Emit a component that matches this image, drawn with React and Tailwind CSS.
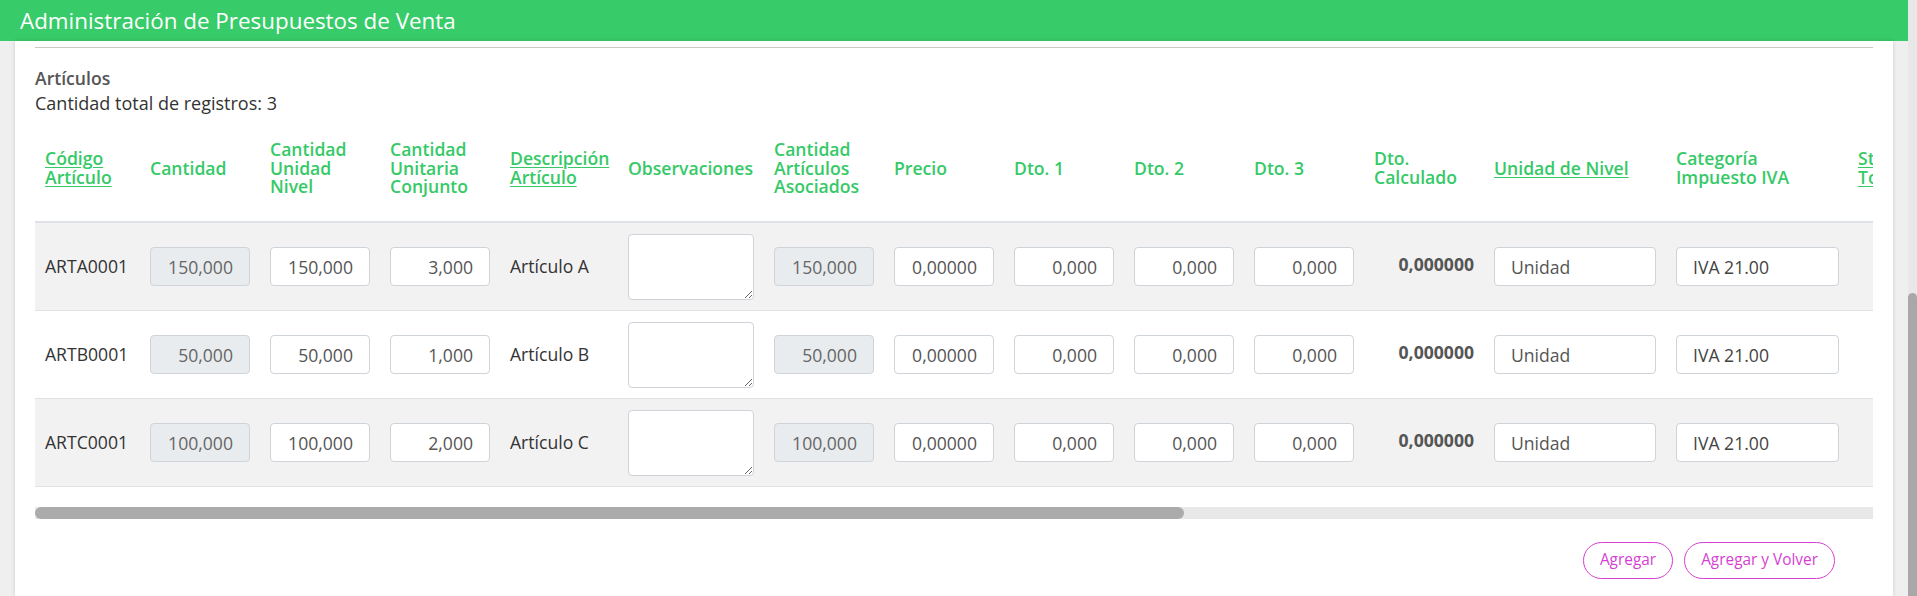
import React from 'react';

const rows = [
    { code: 'ARTA0001', qty: '150,000', qtyLevel: '150,000', unit: '3,000', desc: 'Artículo A', assoc: '150,000' },
    { code: 'ARTB0001', qty: '50,000', qtyLevel: '50,000', unit: '1,000', desc: 'Artículo B', assoc: '50,000' },
    { code: 'ARTC0001', qty: '100,000', qtyLevel: '100,000', unit: '2,000', desc: 'Artículo C', assoc: '100,000' },
];

// header cells: width class + label lines + whether it is a sort link
const headers = [
    { w: 'w-[105px]', lines: ['Código', 'Artículo'], link: true },
    { w: 'w-[120px]', lines: ['Cantidad'] },
    { w: 'w-[120px]', lines: ['Cantidad', 'Unidad', 'Nivel'] },
    { w: 'w-[120px]', lines: ['Cantidad', 'Unitaria', 'Conjunto'] },
    { w: 'w-[118px]', lines: ['Descripción', 'Artículo'], link: true },
    { w: 'w-[146px]', lines: ['Observaciones'] },
    { w: 'w-[120px]', lines: ['Cantidad', 'Artículos', 'Asociados'] },
    { w: 'w-[120px]', lines: ['Precio'] },
    { w: 'w-[120px]', lines: ['Dto. 1'] },
    { w: 'w-[120px]', lines: ['Dto. 2'] },
    { w: 'w-[120px]', lines: ['Dto. 3'] },
    { w: 'w-[120px]', lines: ['Dto.', 'Calculado'] },
    { w: 'w-[182px]', lines: ['Unidad de Nivel'], link: true },
    { w: 'w-[182px]', lines: ['Categoría', 'Impuesto IVA'] },
    { w: 'w-[182px]', lines: ['Stock', 'Total'], link: true },
];

function Field({ value, locked, wide, left }) {
    return (
        <input
            type="text"
            readOnly
            defaultValue={value}
            className={`block h-[39px] rounded-[4px] border border-[#ced4da] text-[17.6px] outline-none ${wide || 'w-[100px]'} ${left ? 'pl-[16px] text-left' : 'pr-[16px] text-right'} ${locked ? 'bg-[#e9ecef] text-[#666]' : 'bg-white text-[#555]'}`}
        />
    );
}

export default function App() {
    return (
        <div className="flex h-[596px] w-full overflow-hidden bg-[#efefef] font-['Open_Sans',sans-serif]">
            <div className="flex min-w-0 flex-1 flex-col">
                <header className="flex h-[41px] shrink-0 items-center bg-[#37cb69] pl-[20px] text-[22.4px] text-white">
                    Administración de Presupuestos de Venta
                </header>

                <div className="flex-1 px-[15px]">
                    <section className="h-full bg-white px-[20px] pt-[6px] shadow-[0_0_4px_rgba(0,0,0,0.15)]">
                        <div className="border-t border-[#c8c8c8]" />

                        <div className="mt-[18px] leading-[25px]">
                            <div className="text-[17.6px] font-semibold text-[#555]">Artículos</div>
                            <div className="text-[18px] text-[#333]">Cantidad total de registros: 3</div>
                        </div>

                        <div className="mt-[12px] overflow-hidden">
                            <table className="w-[1995px] table-fixed border-collapse text-[17.6px]">
                                <thead>
                                    <tr>
                                        {headers.map((h, i) => (
                                            <th
                                                key={i}
                                                className={`${h.w} border-b-2 border-[#dee2e6] px-[10px] pt-[12px] pb-[25px] text-left align-middle font-semibold leading-[18.5px] text-[#36c967]`}
                                            >
                                                <span className={h.link ? 'underline underline-offset-2' : ''}>
                                                    {h.lines.map((l, j) => (
                                                        <React.Fragment key={j}>
                                                            {j > 0 && <br />}
                                                            {l}
                                                        </React.Fragment>
                                                    ))}
                                                </span>
                                            </th>
                                        ))}
                                    </tr>
                                </thead>
                                <tbody>
                                    {rows.map((r, i) => (
                                        <tr key={r.code} className={i % 2 === 0 ? 'bg-[#f2f2f2]' : 'bg-white'}>
                                            <td className="border-b border-[#dee2e6] px-[10px] pt-[11px] pb-[10px] align-middle text-[#333]">{r.code}</td>
                                            <td className="border-b border-[#dee2e6] px-[10px] pt-[11px] pb-[10px] align-middle"><Field value={r.qty} locked /></td>
                                            <td className="border-b border-[#dee2e6] px-[10px] pt-[11px] pb-[10px] align-middle"><Field value={r.qtyLevel} /></td>
                                            <td className="border-b border-[#dee2e6] px-[10px] pt-[11px] pb-[10px] align-middle"><Field value={r.unit} /></td>
                                            <td className="border-b border-[#dee2e6] px-[10px] pt-[11px] pb-[10px] align-middle text-[#333]">{r.desc}</td>
                                            <td className="border-b border-[#dee2e6] px-[10px] pt-[11px] pb-[10px] align-middle">
                                                <textarea className="block h-[66px] w-[126px] resize rounded-[4px] border border-[#ced4da] bg-white outline-none" />
                                            </td>
                                            <td className="border-b border-[#dee2e6] px-[10px] pt-[11px] pb-[10px] align-middle"><Field value={r.assoc} locked /></td>
                                            <td className="border-b border-[#dee2e6] px-[10px] pt-[11px] pb-[10px] align-middle"><Field value="0,00000" /></td>
                                            <td className="border-b border-[#dee2e6] px-[10px] pt-[11px] pb-[10px] align-middle"><Field value="0,000" /></td>
                                            <td className="border-b border-[#dee2e6] px-[10px] pt-[11px] pb-[10px] align-middle"><Field value="0,000" /></td>
                                            <td className="border-b border-[#dee2e6] px-[10px] pt-[11px] pb-[10px] align-middle"><Field value="0,000" /></td>
                                            <td className="border-b border-[#dee2e6] px-[10px] pt-[11px] pb-[14px] text-right align-middle font-bold text-[#555]">0,000000</td>
                                            <td className="border-b border-[#dee2e6] px-[10px] pt-[11px] pb-[10px] align-middle">
                                                <Field value="Unidad" wide="w-[162px]" left />
                                            </td>
                                            <td className="border-b border-[#dee2e6] px-[10px] pt-[11px] pb-[10px] align-middle">
                                                <input
                                                    type="text"
                                                    readOnly
                                                    defaultValue="IVA 21.00"
                                                    className="block h-[39px] w-[163px] rounded-[4px] border border-[#ced4da] bg-white pl-[16px] text-[17.6px] text-[#444] outline-none"
                                                />
                                            </td>
                                            <td className="border-b border-[#dee2e6] px-[10px] pt-[11px] pb-[10px] align-middle" />
                                        </tr>
                                    ))}
                                </tbody>
                            </table>
                        </div>

                        {/* horizontal scrollbar of the grid */}
                        <div className="mt-[20px] h-[12px] bg-[#e8e8e8]">
                            <div className="h-full w-[1149px] rounded-full bg-[#ababab]" />
                        </div>

                        <div className="mt-[23px] flex justify-end gap-[11px] pr-[38px]">
                            <button className="h-[37px] rounded-full border border-[#d63fd2] px-[16px] text-[15.4px] text-[#d63fd2]">
                                Agregar
                            </button>
                            <button className="h-[37px] rounded-full border border-[#d63fd2] px-[16px] text-[15.4px] text-[#d63fd2]">
                                Agregar y Volver
                            </button>
                        </div>
                    </section>
                </div>
            </div>

            {/* page scrollbar */}
            <div className="flex w-[9px] shrink-0 flex-col bg-[#e8e8e8]">
                <div className="h-[293px] shrink-0" />
                <div className="flex-1 rounded-t-[5px] bg-[#a8a8a8]" />
            </div>
        </div>
    );
}
